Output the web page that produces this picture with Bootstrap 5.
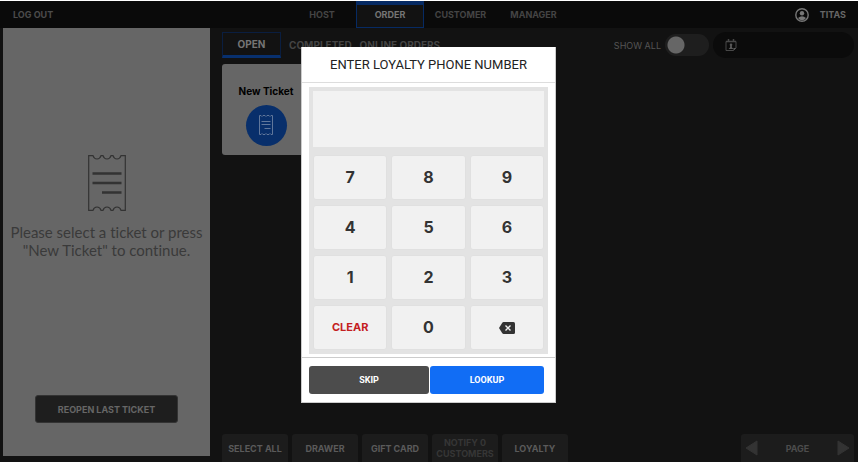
<!DOCTYPE html>
<html lang="en">
<head>
<meta charset="utf-8">
<meta name="viewport" content="width=device-width, initial-scale=1">
<title>Orders</title>
<link href="https://cdn.jsdelivr.net/npm/bootstrap@5.3.0/dist/css/bootstrap.min.css" rel="stylesheet">
<style>
body { background: #121212; font-family: Inter, "Liberation Sans", sans-serif; font-size: 9px; line-height: 11px; color: #666; border-top: 1px solid #fff; border-right: 1px solid #fff; }
button, a { font-weight: 700; }
.topbar { display: grid; grid-template-columns: 1fr auto 1fr; height: 27px; background: #0a0a0a; }
.topbar a, .filter-tabs a { color: #444; text-decoration: none; display: flex; align-items: center; justify-content: center; }
.topbar .log-out { color: #4c4c4c; padding-left: 13px; }
.topbar .main-tab { width: 68px; border: 1px solid transparent; }
.topbar .main-tab.wide { width: 73px; }
.topbar .main-tab.active { color: #757575; background: #121212; border: 1px solid #062a63; border-top-width: 4px; padding-bottom: 3px; }
.topbar .user-link { color: #666; gap: 11px; }
.workspace { padding-left: 3px; }
.ticket-pane { width: 207px; background: #666; margin-bottom: 6px; padding: 127px 0 33px; color: #333; }
.ticket-pane p { font-family: Lato, sans-serif; font-size: 15px; line-height: 18px; font-weight: 400; font-variant-ligatures: none; color: #3a3a3a; margin: 12px 0 0; }
.reopen { width: 143px; height: 28px; background: #1e1e1e; color: #666; border: 1px solid #333; border-radius: 3px; }
.orders { padding: 4px 4px 0 12px; }
.filter-tabs a { font-size: 10px; height: 26px; }
.filter-tabs .active { width: 59px; color: #757575; border: 1px solid #0a1e40; border-bottom: 3px solid #08306e; padding-top: 1px; }
.show-all { font-size: 9px; font-weight: 400; color: #555; }
.toggle { appearance: none; width: 44px; height: 22px; margin: 0; border-radius: 11px; background: radial-gradient(circle at 11px 11px, #666 8px, #1e1e1e 9px); }
.date-box { width: 141px; height: 26px; border-radius: 13px; background: #0b0b0b; padding: 0 12px; }
.date-box input { width: 90px; background: transparent; border: 0; outline: 0; color: #666; }
.new-ticket { width: 88px; height: 91px; margin-top: 6px; padding: 12px 0 0; border: 0; border-radius: 3px; background: #666; color: #000; font-size: 10px; }
.round-icon { width: 41px; height: 41px; border-radius: 50%; background: #082f6b; margin-top: 8px; }
.action { width: 66px; height: 28px; padding: 0; background: #1c1c1c; color: #5a5a5a; border: 0; border-radius: 3px 3px 0 0; }
.action:disabled { color: #363636; }
.pager { width: 113px; height: 28px; background: #1c1c1c; border-radius: 3px 3px 0 0; padding: 0 4px; color: #4c4c4c; font-weight: 700; }
.pager button { padding: 0; border: 0; background: none; line-height: 1; }
.dialog-layer { position: fixed; inset: 0; padding: 47px 2px 0 0; }
.dialog-box { width: 255px; background: #fff; border: 1px solid #ccc; border-width: 0 1px 1px; }
.dialog-box h1 { font: 400 13px/34px Roboto, sans-serif; color: #222; margin: 0; padding-top: 1px; border-bottom: 1px solid #ddd; text-align: center; }
.keypad { background: #e3e3e3; margin: 4px 7px 3px; padding: 4px; }
.keypad input { display: block; width: 100%; height: 56px; border: 0; border-radius: 0; background: #f2f2f2; margin-bottom: 8px; padding: 0 8px; font-size: 18px; }
.keys { display: grid; grid-template-columns: repeat(3, 1fr); grid-auto-rows: 45px; gap: 5px 4px; }
.keys button { border: 1px solid #e0e0e0; border-radius: 3px; background: #f1f1f1; color: #333; font-size: 16px; padding: 0; }
.keys .clear { color: #c4201f; font-size: 11px; }
.dialog-actions { border-top: 1px solid #ccc; padding: 8px 11px 8px 7px; gap: 1px; }
.dialog-actions button { height: 28px; border: 0; border-radius: 3px; color: #fff; font: 700 9px Roboto, sans-serif; }
.skip { width: 120px; background: #4c4c4c; }
.lookup { background: #116df5; }
</style>
<script src="https://cdn.jsdelivr.net/npm/bootstrap@5.3.0/dist/js/bootstrap.bundle.min.js"></script>
</head>
<body class="min-vh-100 d-flex flex-column">
<header class="topbar">
  <div class="d-flex"><a href="#" class="log-out">LOG OUT</a></div>
  <nav class="d-flex">
    <a href="#" class="main-tab">HOST</a>
    <a href="#" class="main-tab active">ORDER</a>
    <a href="#" class="main-tab wide">CUSTOMER</a>
    <a href="#" class="main-tab wide">MANAGER</a>
  </nav>
  <div class="d-flex justify-content-end pe-2 me-1">
    <a href="#" class="user-link"><svg width="14" height="14" viewBox="0 0 14 14"><circle cx="7" cy="7" r="6.2" fill="none" stroke="#777" stroke-width="1.4"/><circle cx="7" cy="5.2" r="2.2" fill="#777"/><path d="M3 10Q7 6.500 11 10Q9.500 12.300 7 12.300T3 10" fill="#777"/></svg>TITAS</a>
  </div>
</header>
<main class="workspace d-flex flex-grow-1">
  <aside class="ticket-pane d-flex flex-column align-items-center text-center flex-shrink-0">
    <svg width="38" height="56" viewBox="0 0 38 56" fill="none" stroke="#333"><path d="M.7.7H5Q6 4 9 4T13 .7H15Q16 4 19 4T23 .7H25Q26 4 29 4T33 .7H37.300V55.300H33Q32 52 29 52T25 55.300H23Q22 52 19 52T15 55.300H13Q12 52 9 52T5 55.300H.7Z" stroke-width="1.200"/><path d="M4.500 18.500H33.500M4.500 28H33.500M14 37.500H33.500" stroke-width="2.300"/></svg>
    <p>Please select a ticket or press<br>"New Ticket" to continue.</p>
    <button class="reopen mt-auto" type="button">REOPEN LAST TICKET</button>
  </aside>
  <section class="orders d-flex flex-column flex-grow-1">
    <div class="d-flex align-items-center">
      <nav class="filter-tabs d-flex">
        <a href="#" class="active">OPEN</a>
        <a href="#" class="ms-2">COMPLETED</a>
        <a href="#" class="ms-2">ONLINE ORDERS</a>
      </nav>
      <label class="show-all ms-auto me-1" for="showAll">SHOW ALL</label>
      <input class="toggle me-1" type="checkbox" role="switch" id="showAll">
      <label class="date-box d-flex align-items-center"><svg width="12" height="14" viewBox="0 0 12 14"><path d="M1 3.500H11V10L8.500 12.500H1Z" fill="none" stroke="#484848"/><path d="M3.500 1V4M8.500 1V4M1 3.500H11" fill="none" stroke="#484848" stroke-width="1.500"/><circle cx="6" cy="6.700" r="1.300" fill="#585858"/><path d="M5.300 7H6.700L7 9.500 8.500 11H3.500L5 9.500ZM8.500 12.500V10H11Z" fill="#585858"/></svg><input type="text" aria-label="Date"></label>
    </div>
    <button class="new-ticket d-flex flex-column align-items-center justify-content-center" type="button">New Ticket
      <span class="round-icon d-flex align-items-center justify-content-center"><svg width="14" height="20" viewBox="0 0 14 20" fill="none" stroke="#60779b"><path d="M.5.500H2L3 1.500 4 .5H6L7 1.500 8 .5H10L11 1.500 12 .5H13.500V19.500H12L11 18.500 10 19.500H8L7 18.500 6 19.500H4L3 18.500 2 19.500H.5Z"/><path d="M2.500 6.500H11.500M2.500 9.500H11.500M5.500 13.500H11.500"/></svg></span>
    </button>
    <footer class="d-flex gap-1 mt-auto">
      <button class="action" type="button">SELECT ALL</button>
      <button class="action" type="button">DRAWER</button>
      <button class="action" type="button">GIFT CARD</button>
      <button class="action" type="button" disabled>NOTIFY 0 CUSTOMERS</button>
      <button class="action" type="button">LOYALTY</button>
      <div class="pager d-flex align-items-center justify-content-between ms-auto">
        <button type="button" aria-label="Previous page"><svg width="13" height="16" viewBox="0 0 13 16"><path d="M12 1V15L1 8Z" fill="#333" stroke="#333" stroke-linejoin="round"/></svg></button>
        <span>PAGE</span>
        <button type="button" aria-label="Next page"><svg width="13" height="16" viewBox="0 0 13 16"><path d="M1 1V15L12 8Z" fill="#333" stroke="#333" stroke-linejoin="round"/></svg></button>
      </div>
    </footer>
  </section>
</main>
<div class="dialog-layer d-flex justify-content-center align-items-start">
  <div class="dialog-box" role="dialog" aria-modal="true" aria-labelledby="dialogTitle">
    <h1 id="dialogTitle">ENTER LOYALTY PHONE NUMBER</h1>
    <div class="keypad">
      <input type="tel" aria-labelledby="dialogTitle">
      <div class="keys">
        <button type="button">7</button><button type="button">8</button><button type="button">9</button>
        <button type="button">4</button><button type="button">5</button><button type="button">6</button>
        <button type="button">1</button><button type="button">2</button><button type="button">3</button>
        <button type="button" class="clear">CLEAR</button><button type="button">0</button>
        <button type="button" aria-label="Backspace"><svg class="d-block mx-auto" width="16" height="12" viewBox="0 0 16 12"><path d="M4.500 0H14.500Q16 0 16 1.500V10.500Q16 12 14.500 12H4.500Q3.800 12 3.300 11.300L0 6 3.300.7Q3.800 0 4.500 0Z" fill="#333"/><path d="M6.500 3.500L11.500 8.500M11.500 3.500L6.500 8.500" stroke="#f1f1f1" stroke-width="1.400"/></svg></button>
      </div>
    </div>
    <div class="dialog-actions d-flex">
      <button class="skip" type="button">SKIP</button>
      <button class="lookup flex-grow-1" type="button">LOOKUP</button>
    </div>
  </div>
</div>
</body>
</html>
